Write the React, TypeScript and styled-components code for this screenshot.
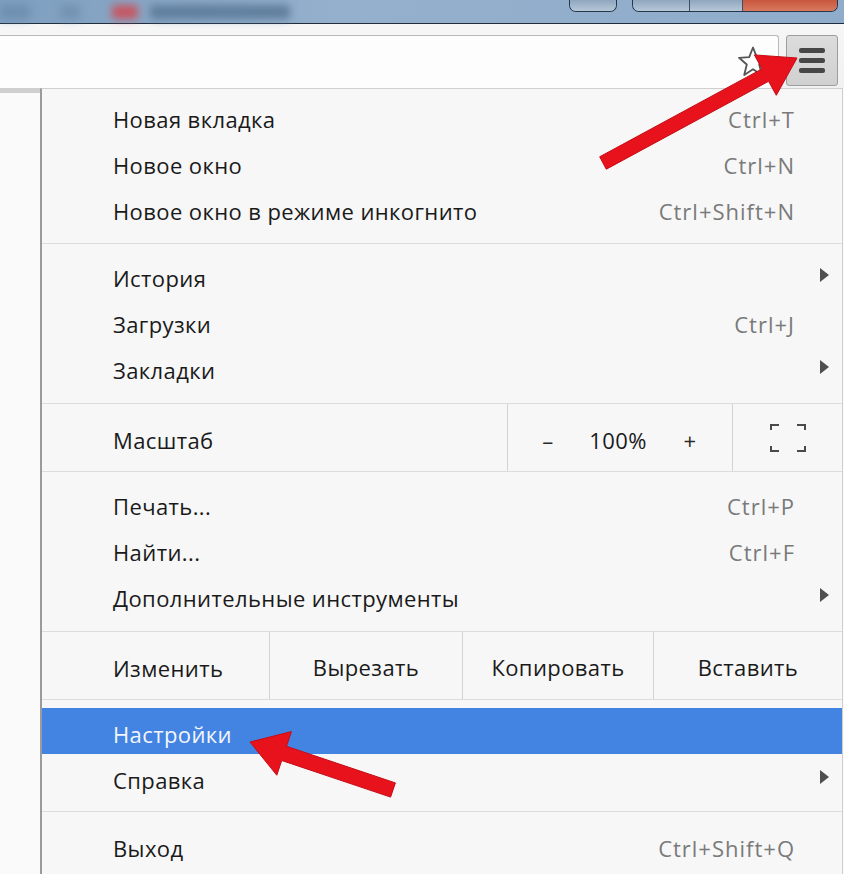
import React from "react"
import styled, { createGlobalStyle } from "styled-components"

const GlobalStyle = createGlobalStyle`
	html, body {
		margin: 0;
		padding: 0;
		background: #f9f9f9;
	}
	body {
		font-family: "Open Sans", "Noto Sans", sans-serif;
	}
`

const Page = styled.div`
	position: relative;
	width: 844px;
	height: 874px;
	overflow: hidden;
	display: flex;
	flex-direction: column;
	background: #f9f9f9;
`

const TitleBar = styled.div`
	flex: none;
	height: 23px;
	display: flex;
	align-items: flex-start;
	background: linear-gradient(90deg, #7f9fc0 0%, #94b0cc 40%, #8faccb 100%);
	border-bottom: 1px solid #1f2d3c;
`

const Blur = styled.span<{ $w: number; $c: string; $ml: number }>`
	display: block;
	width: ${p => p.$w}px;
	height: 14px;
	margin: 5px 0 0 ${p => p.$ml}px;
	background: ${p => p.$c};
	filter: blur(4px);
	border-radius: 3px;
`

const WindowButtons = styled.div`
	display: flex;
	margin-left: auto;
	margin-right: 6px;
	gap: 15px;
`

const WinGroup = styled.div`
	display: flex;
	height: 11px;
	border: 1.5px solid #24384c;
	border-top: none;
	border-radius: 0 0 7px 7px;
	overflow: hidden;
`

const WinButton = styled.div<{ $w: number; $close?: boolean }>`
	width: ${p => p.$w}px;
	background: ${p => (p.$close ? "linear-gradient(#c7573e, #d9785e)" : "linear-gradient(#8ea6bf, #b7c7d7)")};
	& + & {
		border-left: 1px solid #3d4f62;
	}
`

const Toolbar = styled.div`
	flex: none;
	height: 64px;
	display: flex;
	align-items: flex-start;
	background: linear-gradient(#f6f6f6, #f1f1f1);
`

const Omnibox = styled.div`
	flex: 1;
	height: 52px;
	margin: 11px 0 0 -10px;
	display: flex;
	align-items: center;
	justify-content: flex-end;
	padding-right: 9px;
	background: #fdfdfd;
	border: 1px solid #b9b9b9;
	border-bottom: none;
	border-radius: 0 3px 0 0;
`

const MenuButton = styled.div`
	flex: none;
	width: 50px;
	height: 49px;
	margin: 11px 6px 0 7px;
	display: flex;
	flex-direction: column;
	align-items: center;
	justify-content: center;
	gap: 5px;
	background: linear-gradient(#dcdcdc, #d0d0d0);
	border: 1px solid #9d9d9d;
	border-radius: 3px;
`

const Bar = styled.span`
	display: block;
	width: 26px;
	height: 5px;
	border-radius: 2px;
	background: #464646;
`

const Body = styled.div`
	flex: 1;
	display: flex;
	min-height: 0;
`

const Gutter = styled.div`
	flex: none;
	width: 40px;
	background: #fafafa;
	border-top: 5px solid #cfcfcf;
`

const Menu = styled.div`
	flex: none;
	width: 800px;
	background: #f7f7f7;
	border-left: 2px solid #9b9b9b;
	border-right: 1px solid #cfcfcf;
	border-top: 1px solid #cfcfcf;
	color: #1a1a1a;
	font-size: 22px;
	letter-spacing: 0.4px;
`

const Group = styled.div<{ $pt: number; $pb: number }>`
	padding: ${p => p.$pt}px 0 ${p => p.$pb}px;
	border-bottom: 1px solid #dcdcdc;
`

const Item = styled.div<{ $active?: boolean }>`
	height: 46px;
	box-sizing: border-box;
	display: flex;
	align-items: center;
	padding: 6px 47px 0 71px;
	background: ${p => (p.$active ? "#4384e2" : "transparent")};
	color: ${p => (p.$active ? "#f2f6fd" : "#1a1a1a")};
`

const Label = styled.span`
	flex: 1;
	white-space: nowrap;
`

const Shortcut = styled.span`
	color: #7a7a7a;
	letter-spacing: 1px;
	white-space: nowrap;
`

const SubArrow = styled.span`
	width: 0;
	height: 0;
	margin: -6px -34px 0 0;
	border-top: 7px solid transparent;
	border-bottom: 7px solid transparent;
	border-left: 9px solid #4f4f4f;
`

const SplitRow = styled.div`
	height: 67px;
	display: flex;
	border-bottom: 1px solid #dcdcdc;
`

const RowLabel = styled.div<{ $w?: number }>`
	${p => (p.$w ? `flex: none; width: ${p.$w}px;` : "flex: 1;")}
	display: flex;
	align-items: center;
	padding: 5px 0 0 71px;
	box-sizing: border-box;
`

const ZoomControls = styled.div`
	flex: none;
	width: 224px;
	display: grid;
	grid-template-columns: 80px 60px 84px;
	align-items: center;
	justify-items: center;
	padding-top: 5px;
	border-left: 1px solid #d3d3d3;
`

const ZoomSign = styled.span`
	color: #2a2a2a;
`

const FullscreenCell = styled.div`
	flex: none;
	width: 109px;
	display: flex;
	align-items: center;
	justify-content: center;
	border-left: 1px solid #d3d3d3;
`

const EditButton = styled.div<{ $w?: number }>`
	${p => (p.$w ? `flex: none; width: ${p.$w}px;` : "flex: 1;")}
	display: flex;
	align-items: center;
	justify-content: center;
	padding-top: 3px;
	box-sizing: border-box;
	border-left: 1px solid #d3d3d3;
`

const Overlay = styled.svg`
	position: absolute;
	left: 0;
	top: 0;
	pointer-events: none;
`

const Star = () => (
	<svg width="32" height="33" viewBox="0 0 32 33">
		<path
			d="M16 1.5 L19.8 11.2 L30 11.8 L22.2 18.5 L24.8 29 L16 23.2 L7.2 29 L9.8 18.5 L2 11.8 L12.2 11.2 Z"
			fill="#fff"
			stroke="#555"
			strokeWidth="1.8"
			strokeLinejoin="round"
		/>
	</svg>
)

const FullscreenIcon = () => (
	<svg width="36" height="28" viewBox="0 0 36 28" fill="none" stroke="#4a4a4a" strokeWidth="2">
		<path d="M1 6 V1 H9 M27 1 H35 V6 M1 22 V27 H9 M27 27 H35 V22" />
	</svg>
)

type Entry = { label: string; shortcut?: string; sub?: boolean; active?: boolean }
type MenuGroup = { pt: number; pb: number; items: Entry[] }

const groupsTop: MenuGroup[] = [
	{
		pt: 4,
		pb: 12,
		items: [
			{ label: "Новая вкладка", shortcut: "Ctrl+T" },
			{ label: "Новое окно", shortcut: "Ctrl+N" },
			{ label: "Новое окно в режиме инкогнито", shortcut: "Ctrl+Shift+N" },
		],
	},
	{
		pt: 8,
		pb: 13,
		items: [
			{ label: "История", sub: true },
			{ label: "Загрузки", shortcut: "Ctrl+J" },
			{ label: "Закладки", sub: true },
		],
	},
]

const groupsAfterZoom: MenuGroup[] = [
	{
		pt: 8,
		pb: 13,
		items: [
			{ label: "Печать...", shortcut: "Ctrl+P" },
			{ label: "Найти...", shortcut: "Ctrl+F" },
			{ label: "Дополнительные инструменты", sub: true },
		],
	},
]

const groupsAfterEdit: MenuGroup[] = [
	{
		pt: 8,
		pb: 11,
		items: [
			{ label: "Настройки", active: true },
			{ label: "Справка", sub: true },
		],
	},
	{ pt: 10, pb: 12, items: [{ label: "Выход", shortcut: "Ctrl+Shift+Q" }] },
]

const renderGroups = (list: MenuGroup[], prefix: string) =>
	list.map((group, gi) => (
		<Group key={`${prefix}-${gi}`} $pt={group.pt} $pb={group.pb}>
			{group.items.map((entry) => (
				<Item key={entry.label} $active={entry.active}>
					<Label>{entry.label}</Label>
					{entry.shortcut && <Shortcut>{entry.shortcut}</Shortcut>}
					{entry.sub && <SubArrow />}
				</Item>
			))}
		</Group>
	))

export default function App() {
	return (
		<Page>
			<GlobalStyle />
			<TitleBar>
				<Blur $w={30} $c="#6f8fb0" $ml={0} />
				<Blur $w={20} $c="#7392b2" $ml={30} />
				<Blur $w={26} $c="#c8545e" $ml={32} />
				<Blur $w={140} $c="#5f7d9c" $ml={12} />
				<WindowButtons>
					<WinGroup>
						<WinButton $w={46} />
					</WinGroup>
					<WinGroup>
						<WinButton $w={56} />
						<WinButton $w={52} />
						<WinButton $w={94} $close />
					</WinGroup>
				</WindowButtons>
			</TitleBar>
			<Toolbar>
				<Omnibox>
					<Star />
				</Omnibox>
				<MenuButton>
					<Bar />
					<Bar />
					<Bar />
				</MenuButton>
			</Toolbar>
			<Body>
				<Gutter />
				<Menu>
					{renderGroups(groupsTop, "a")}
					<SplitRow>
						<RowLabel>Масштаб</RowLabel>
						<ZoomControls>
							<ZoomSign>–</ZoomSign>
							<span>100%</span>
							<ZoomSign>+</ZoomSign>
						</ZoomControls>
						<FullscreenCell>
							<FullscreenIcon />
						</FullscreenCell>
					</SplitRow>
					{renderGroups(groupsAfterZoom, "b")}
					<SplitRow>
						<RowLabel $w={227}>Изменить</RowLabel>
						<EditButton $w={193}>Вырезать</EditButton>
						<EditButton $w={191}>Копировать</EditButton>
						<EditButton>Вставить</EditButton>
					</SplitRow>
					{renderGroups(groupsAfterEdit, "c")}
				</Menu>
			</Body>
			<Overlay width="844" height="874" viewBox="0 0 844 874">
				<polygon
					points="606.3,169.2 768.6,81.3 776.3,95.3 797,58 754.4,54.9 762,68.9 599.7,156.8"
					fill="#e8121c"
					stroke="#c40c14"
					strokeWidth="1"
					strokeLinejoin="round"
				/>
				<polygon
					points="250,742 291.4,731.6 286.5,746.3 395.4,782.9 390.6,797.1 281.7,760.5 276.8,775.2"
					fill="#e8121c"
					stroke="#c40c14"
					strokeWidth="1"
					strokeLinejoin="round"
				/>
			</Overlay>
		</Page>
	)
}
